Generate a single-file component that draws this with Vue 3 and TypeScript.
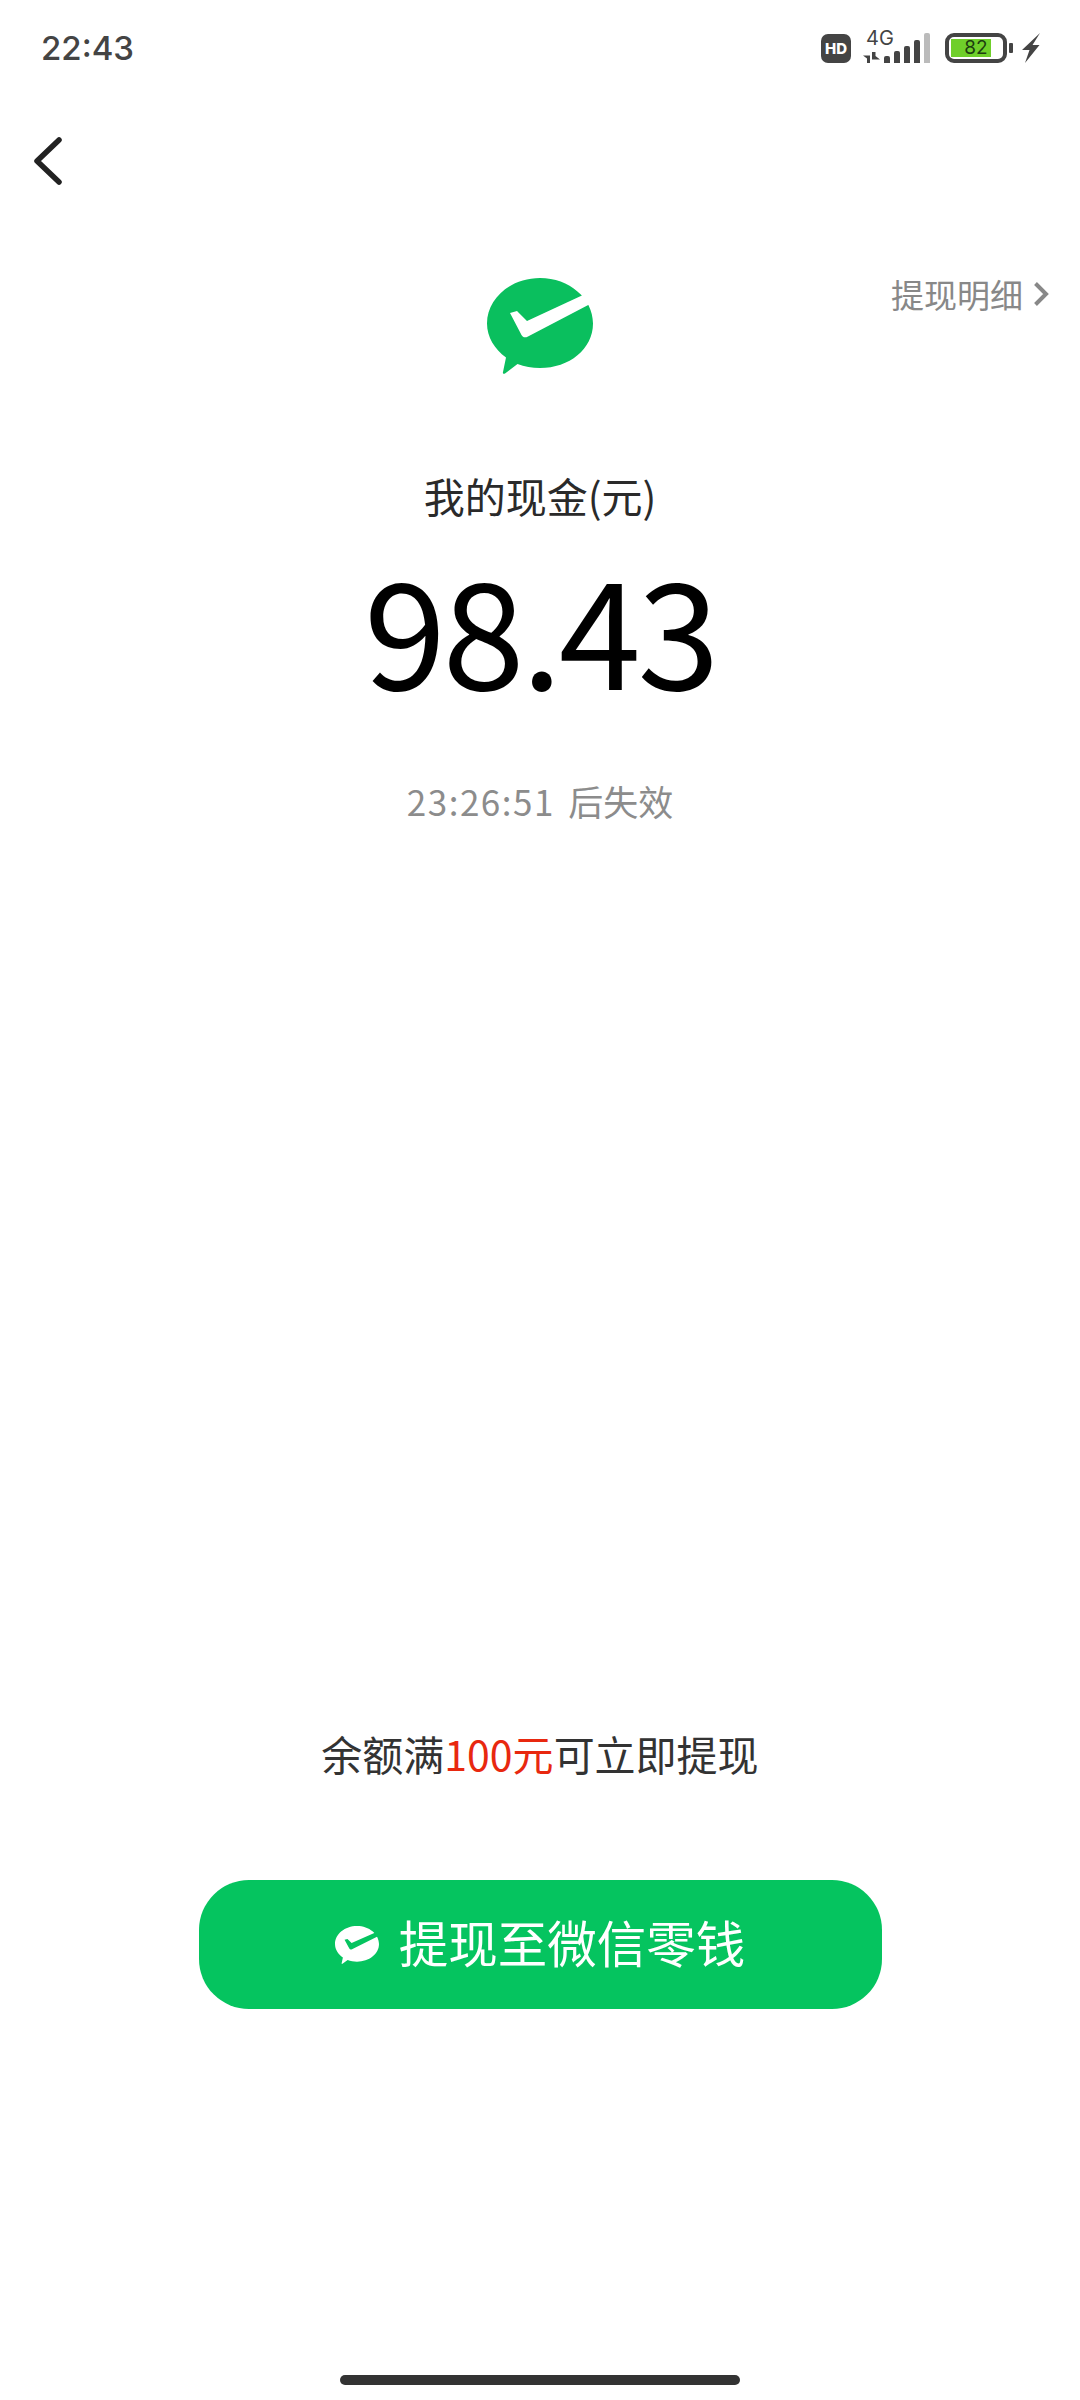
<script setup lang="ts">
const bars = [7, 12, 17, 23]
</script>

<template>
  <div class="page">
    <div class="status">
      <span class="time">22:43</span>
      <div class="status-icons">
        <span class="hd">HD</span>
        <div class="net">
          <span class="net-label">4G</span>
          <svg class="arrows" width="17" height="11" viewBox="0 0 17 11">
            <path d="M0 3.500H7V11H4V6.500L0 3.500Z" fill="#444" />
            <path d="M9 0V7.500H17L12.500 4V0H9Z" fill="#444" />
          </svg>
          <div class="signal">
            <i v-for="(h, n) in bars" :key="n" class="bar" :style="{ height: h + 'px' }"></i>
            <i class="bar off"></i>
          </div>
        </div>
        <div class="battery">
          <div class="battery-body">
            <div class="battery-fill"></div>
            <span class="battery-num">82</span>
          </div>
          <i class="battery-cap"></i>
        </div>
        <svg class="bolt" width="18" height="30" viewBox="0 0 18 30">
          <path d="M18 0L0 17H7.500L3 30L17.500 12H10.500L18 0Z" fill="#444" />
        </svg>
      </div>
    </div>

    <div class="nav">
      <svg width="30" height="50" viewBox="0 0 30 50">
        <path d="M26 4L4 25L26 46" fill="none" stroke="#222" stroke-width="5.500" stroke-linecap="round" stroke-linejoin="round" />
      </svg>
    </div>

    <div class="head">
      <span></span>
      <svg class="logo" width="106" height="96" viewBox="0 0 106 96">
        <path d="M53 0C82.300 0 106 20.500 106 45.500C106 71 82.300 90 53 90C45 90 37.500 88.500 30.500 86L18 95.500C16.500 96.300 15.500 95.500 16 94L19 79.500C7.500 71 0 59 0 45.500C0 20.500 23.700 0 53 0Z" fill="#0ABF5E" />
        <path d="M23 35L30 33L40 43L96 17L107 24L41 58.500C38 60 36 59.500 34.500 57L23 35Z" fill="#fff" />
      </svg>
      <div class="detail">
        <span>提现明细</span>
        <svg width="16" height="26" viewBox="0 0 16 26">
          <path d="M2.500 2.500L13 13L2.500 23.500" fill="none" stroke="#888" stroke-width="4" />
        </svg>
      </div>
    </div>

    <div class="label">我的现金(元)</div>
    <div class="amount">98.43</div>
    <div class="expire">23:26:51 <span class="expire-cn">后失效</span></div>

    <div class="grow"></div>

    <div class="hint">余额满<span class="red">100元</span>可立即提现</div>
    <button class="withdraw">
      <svg width="44" height="38" viewBox="0 0 106 96" preserveAspectRatio="none">
        <path d="M53 0C82.300 0 106 20.500 106 45.500C106 71 82.300 90 53 90C45 90 37.500 88.500 30.500 86L18 95.500C16.500 96.300 15.500 95.500 16 94L19 79.500C7.500 71 0 59 0 45.500C0 20.500 23.700 0 53 0Z" fill="#fff" />
        <path d="M23 35L30 33L40 43L96 17L107 24L41 58.500C38 60 36 59.500 34.500 57L23 35Z" fill="#05C45F" />
      </svg>
      <span class="withdraw-text">提现至微信零钱</span>
    </button>

    <div class="home"></div>
  </div>
</template>

<style>
body {
  background: #fff;
}
</style>

<style scoped>
.page {
  width: 1080px;
  height: 2400px;
  display: flex;
  flex-direction: column;
  align-items: center;
  background: #fff;
  font-family: "Noto Sans CJK SC", "Noto Sans", sans-serif;
  overflow: hidden;
}

.status {
  width: 100%;
  height: 96px;
  box-sizing: border-box;
  padding: 0 40px 0 41px;
  display: flex;
  justify-content: space-between;
  align-items: center;
}

.time {
  font-family: Inter, sans-serif;
  font-size: 33px;
  font-weight: 500;
  color: #444;
}

.status-icons {
  display: flex;
  align-items: center;
}

.hd {
  width: 30px;
  height: 29px;
  border-radius: 7px;
  background: #444;
  color: #fff;
  font-family: Inter, sans-serif;
  font-size: 15px;
  font-weight: 800;
  line-height: 29px;
  text-align: center;
}

.net {
  position: relative;
  width: 67px;
  height: 30px;
  margin-left: 12px;
  display: flex;
  justify-content: space-between;
  align-items: flex-end;
}

.net-label {
  position: absolute;
  left: 3px;
  top: -5px;
  font-family: Inter, sans-serif;
  font-size: 20px;
  line-height: 20px;
  color: #444;
}

.arrows {
  display: block;
}

.signal {
  display: flex;
  align-items: flex-end;
  gap: 4px;
}

.bar {
  width: 6px;
  background: #444;
  border-radius: 2px 2px 0 0;
}

.bar.off {
  height: 30px;
  background: #bbb;
}

.battery {
  display: flex;
  align-items: center;
  margin-left: 15px;
}

.battery-body {
  position: relative;
  width: 62px;
  height: 30px;
  box-sizing: border-box;
  border: 4px solid #444;
  border-radius: 9px;
}

.battery-fill {
  position: absolute;
  left: 2px;
  top: 2px;
  bottom: 2px;
  width: 40px;
  background: #6FCF2A;
}

.battery-num {
  position: absolute;
  left: 0;
  right: 0;
  top: -1px;
  text-align: center;
  font-family: Inter, sans-serif;
  font-size: 19px;
  line-height: 24px;
  color: #1d3d10;
}

.battery-cap {
  width: 4px;
  height: 10px;
  margin-left: 2px;
  background: #444;
  border-radius: 1px;
}

.bolt {
  margin-left: 9px;
}

.nav {
  width: 100%;
  height: 82px;
  box-sizing: border-box;
  padding-left: 33px;
  margin-top: 24px;
  display: flex;
  align-items: center;
}

.head {
  width: 100%;
  margin-top: 76px;
  display: grid;
  grid-template-columns: 1fr auto 1fr;
  align-items: start;
}

.logo {
  display: block;
}

.detail {
  justify-self: end;
  margin: -7px 31px 0 0;
  display: flex;
  align-items: center;
  gap: 10px;
  font-size: 33px;
  line-height: 46px;
  color: #888;
}

.label {
  margin-top: 91px;
  font-size: 41px;
  line-height: 60px;
  color: #2a2a2a;
}

.amount {
  margin-top: 16px;
  font-size: 148px;
  line-height: 170px;
  letter-spacing: -3.500px;
  color: #000;
}

.expire {
  margin-top: 65px;
  font-size: 35px;
  line-height: 50px;
  letter-spacing: 1.500px;
  word-spacing: 4px;
  color: #8c8c8c;
}

.expire-cn {
  letter-spacing: 0;
}

.grow {
  flex: 1;
}

.hint {
  font-size: 41px;
  line-height: 60px;
  color: #333;
}

.red {
  color: #E8280F;
}

.withdraw {
  width: 683px;
  height: 129px;
  margin-top: 97px;
  border: 0;
  border-radius: 50px;
  background: #05C45F;
  color: #fff;
  font-family: inherit;
  font-size: 49.500px;
  display: flex;
  justify-content: center;
  align-items: center;
  gap: 20px;
}

.withdraw-text {
  margin-bottom: 6px;
}

.home {
  width: 400px;
  height: 10px;
  margin-top: 366px;
  margin-bottom: 15px;
  border-radius: 5px;
  background: #333;
}
</style>
